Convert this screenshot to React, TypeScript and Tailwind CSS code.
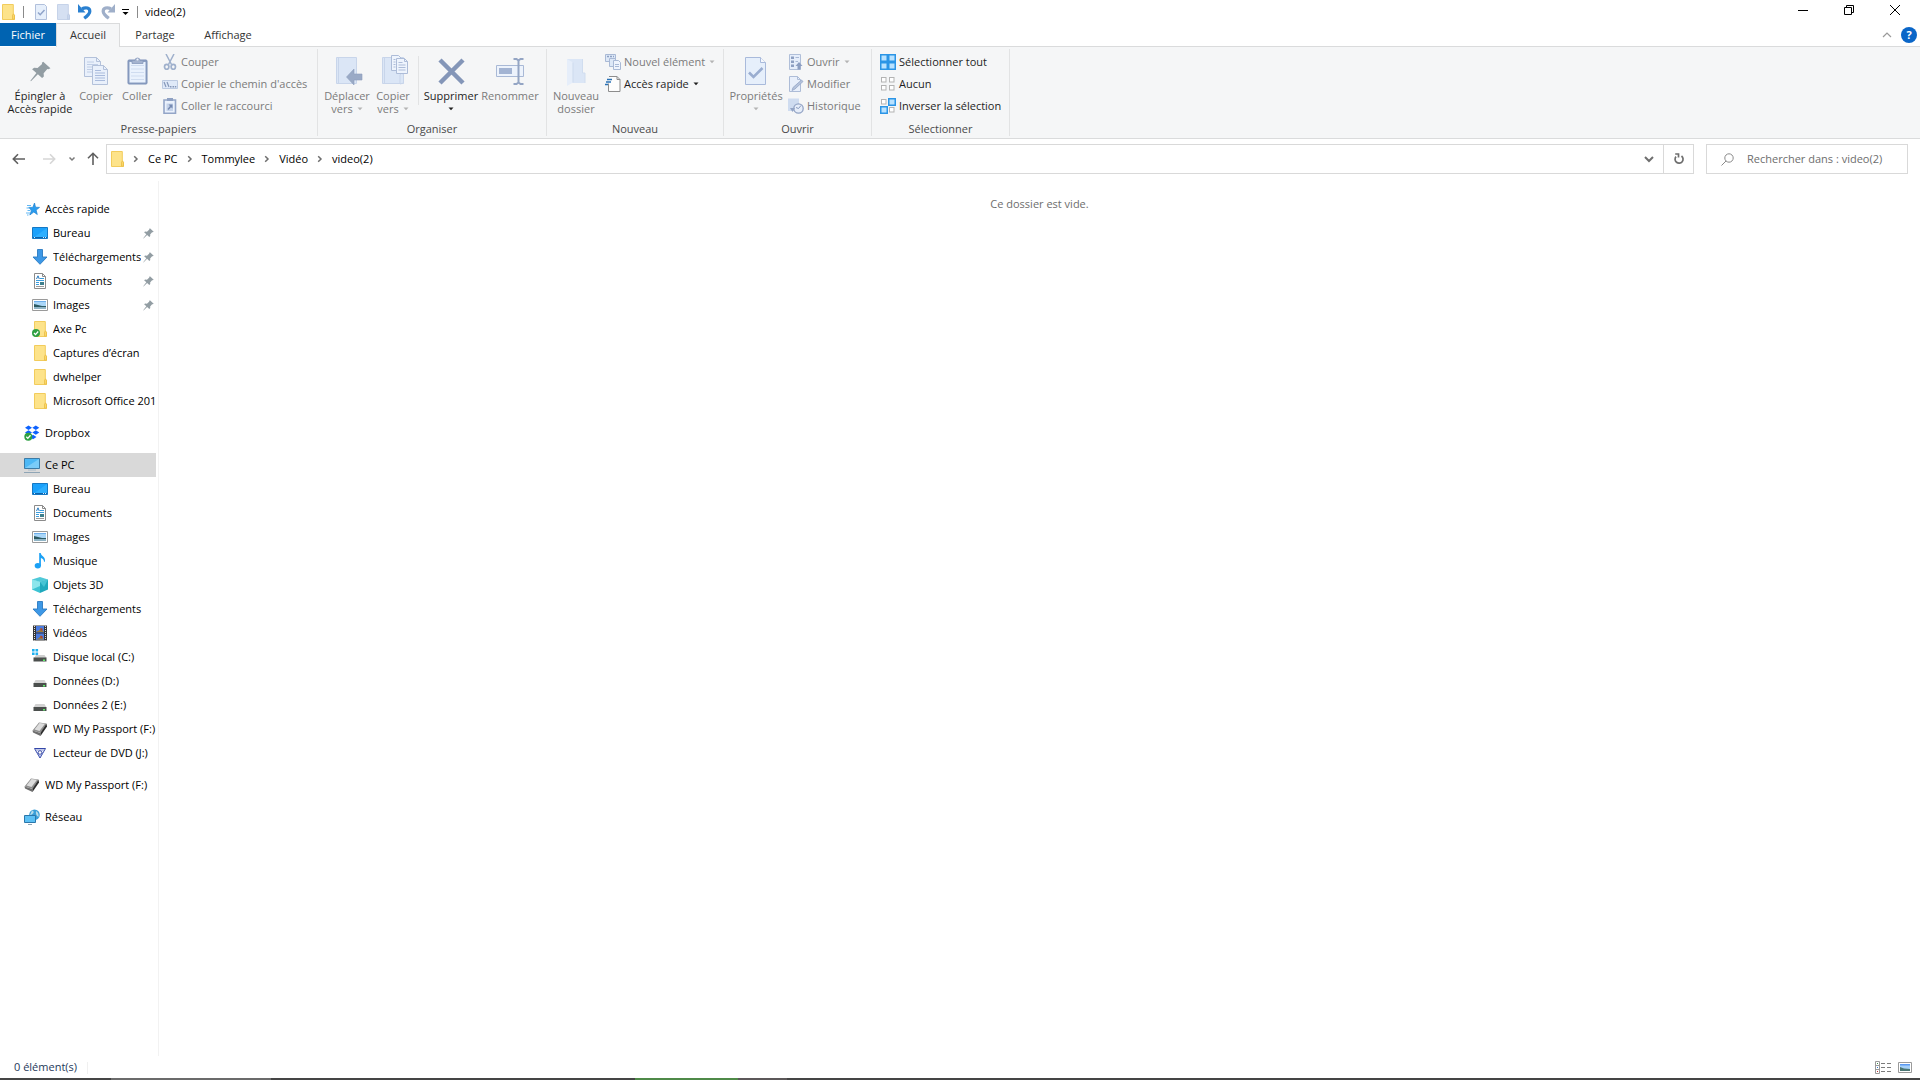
import type { ReactNode } from "react";
import { clsx } from "clsx";

/* ---------- shared glyphs ---------- */

function Caret({ className = "fill-[#b4b4b4]" }: { className?: string }) {
  return (
    <svg width="6" height="4" viewBox="0 0 6 4" className={clsx("shrink-0", className)}>
      <path d="M0.5 0.5h5L3 3.3z" />
    </svg>
  );
}

function Chevron() {
  return (
    <svg width="6" height="8" viewBox="0 0 6 8" fill="none" stroke="#6e6e6e" strokeWidth="1.500">
      <path d="M1.200 1.200L4 4 1.200 6.800" />
    </svg>
  );
}

function FolderIcon({ faded = false }: { faded?: boolean }) {
  return (
    <svg width="16" height="16" viewBox="0 0 16 16">
      <path
        d="M2.500.5h10.800v9.800l1.200 1.200v4h-12z"
        fill={faded ? "#d5e0f2" : "#fde38a"}
        stroke={faded ? "#c6d3e9" : "#f2cc5c"}
      />
      <path
        d="M12.500 15.200v-4l1-1.400 1 1.400v4z"
        fill={faded ? "#c9d6ec" : "#fbd768"}
        stroke={faded ? "#bccbe4" : "#e9bd45"}
        strokeWidth=".8"
      />
    </svg>
  );
}

function PinIcon({ size }: { size: number }) {
  return (
    <svg width={size} height={size} viewBox="0 0 20 20" fill="#929da3">
      <path d="M12.600 0.600l6.900 6.200-1.900 1.100-1.100-.3-3.500 4 .2 3.100-1.700 1.500-4-3.700L.9 19.300l-.5-.5 5.700-7.400L2 7.800l1.900-1.400 3.300.3 4.300-3.800-.2-1.200z" />
    </svg>
  );
}

/* ---------- ribbon icons, large ---------- */

function CopyLarge() {
  return (
    <svg width="32" height="32" viewBox="0 0 32 32" fill="#e9f0fb" stroke="#b3c1da">
      <path d="M4.500 2.500h12l4 4v15h-16z" />
      <path d="M16.500 2.500v4h4" fill="none" />
      <path d="M7 7h7M7 9.500h11M7 12h11M7 14.500h11M7 17h11" stroke="#c0cee6" />
      <path d="M12.500 10.500h11l4 4v15h-15z" />
      <path d="M23.500 10.500v4h4" fill="none" />
      <path d="M15 15.500h6M15 18h10M15 20.500h10M15 23h10M15 25.500h10" stroke="#a9bbdc" />
    </svg>
  );
}

function PasteLarge() {
  return (
    <svg width="32" height="32" viewBox="0 0 32 32">
      <rect x="7" y="5" width="19" height="24" rx="1" fill="#8c9fc2" stroke="#7d91b8" />
      <path d="M8.500 7h16v20.500h-16z" fill="#eaf2fd" />
      <path d="M10 10.500h13M10 14h13M10 17.500h13M10 21h13M10 24.500h13" stroke="#cfdcf0" />
      <path d="M11 8.500v-3h3a2.500 2.500 0 0 1 5 0h3v3z" fill="#a4b3cf" stroke="#8799bb" strokeWidth=".8" />
      <circle cx="16.500" cy="4.500" r="1" fill="#eef3fb" />
    </svg>
  );
}

function MoveLarge() {
  return (
    <svg width="32" height="32" viewBox="0 0 32 32">
      <path d="M5.500 2.500h20v26h-20z" fill="#dbe6f6" stroke="#c8d5ea" />
      <path d="M7.500 3v25" stroke="#c8d5ea" />
      <path d="M15.500 22l7.500-8v5h8v6h-8v5z" fill="#9aaac6" stroke="#8f9fbd" strokeWidth=".6" />
    </svg>
  );
}

function CopyToLarge() {
  return (
    <svg width="32" height="32" viewBox="0 0 32 32">
      <path d="M5.500 2.500h21v26h-21z" fill="#dbe6f6" stroke="#c8d5ea" />
      <path d="M7.500 3v25M23 29v-9l2-3 1.500 3v8z" stroke="#c8d5ea" fill="none" />
      <g fill="#eef4fd" stroke="#adbcd8">
        <path d="M14.500.500h7l3 3v12h-10z" />
        <path d="M16.500 4.500h2M16.500 7h2M16.500 9.500h2M16.500 12h2" />
        <path d="M19.500 3.500h8l3 3v12h-11z" />
        <path d="M27.500 3.500v3h3" fill="none" />
        <path d="M21.500 7.500h4M21.500 10h7M21.500 12.500h7M21.500 15h7" />
      </g>
    </svg>
  );
}

function DeleteLarge() {
  return (
    <svg width="32" height="32" viewBox="0 0 32 32">
      <path d="M5 5l23 23M28 5L5 28" stroke="#8496b8" strokeWidth="4.500" />
    </svg>
  );
}

function RenameLarge() {
  return (
    <svg width="32" height="32" viewBox="0 0 32 32">
      <path d="M2.500 10.500h27v11h-27z" fill="#edf3fc" stroke="#a9b9d6" />
      <path d="M5 13h13v6H5z" fill="#a3b4d3" />
      <path d="M19.500 4h3l2 1.500 2-1.500h3M24.500 5.500v22M19.500 29h3l2-1.500 2 1.500h3" fill="none" stroke="#94a5c4" strokeWidth="2" />
    </svg>
  );
}

function NewFolderLarge() {
  return (
    <svg width="32" height="32" viewBox="0 0 32 32">
      <path d="M7 4h15.500v14h2.500v10H7z" fill="#dbe6f6" />
      <path d="M7 4l6 3.500v20L7 31z" fill="#e6eefa" />
      <path d="M13 7.500v20" stroke="#cddaed" />
      <path d="M22.500 4v14h2.500v10" fill="none" stroke="#d0ddef" />
    </svg>
  );
}

function PropertiesLarge() {
  return (
    <svg width="32" height="32" viewBox="0 0 32 32">
      <path d="M5.500 2.500h15l5 5v22h-20z" fill="#e6effb" stroke="#a9badb" />
      <path d="M20.500 2.500v5h5" fill="#f5f8fd" stroke="#a9badb" />
      <path d="M9 17.500l4.500 4.500L22.500 13" fill="none" stroke="#9aadd0" strokeWidth="2.600" />
    </svg>
  );
}

/* ---------- ribbon icons, small ---------- */

function CutIcon() {
  return (
    <svg width="16" height="16" viewBox="0 0 16 16" fill="none" stroke="#9fb0cc">
      <path d="M4 0l5.500 10.500M12 0L6.500 10.500" strokeWidth="1.500" />
      <ellipse cx="4.700" cy="12.800" rx="2.200" ry="2.500" strokeWidth="1.700" />
      <ellipse cx="11.300" cy="12.800" rx="2.200" ry="2.500" strokeWidth="1.700" />
    </svg>
  );
}

function PathIcon() {
  return (
    <svg width="16" height="16" viewBox="0 0 16 16">
      <path d="M.5 4.500h15v8H.500z" fill="#dfe9f8" stroke="#bccae1" />
      <path d="M2 6l2 5M5 6l2 5" stroke="#8597b8" strokeWidth="1.200" />
      <path d="M8 10h1.500v1.500H8zM10.500 10H12v1.500h-1.500zM12.800 10h1.500v1.500h-1.500z" fill="#8597b8" />
    </svg>
  );
}

function ShortcutPasteIcon() {
  return (
    <svg width="16" height="16" viewBox="0 0 16 16">
      <path d="M2 2h11.500v13.200H2z" fill="#eaf1fc" stroke="#93a5c7" strokeWidth="1.600" />
      <path d="M5 0h6v3H5z" fill="#8fa1c3" />
      <path d="M4.500 5.500h6.500v7.500H4.500z" fill="#c5d3ea" />
      <path d="M6.500 6.500h4v4L9 9.200 6.500 12l-1-1L8 8z" fill="#7589b1" />
    </svg>
  );
}

function NewItemIcon() {
  return (
    <svg width="16" height="16" viewBox="0 0 16 16" fill="#dde8f7" stroke="#a9b9d5">
      <path d="M.5.5h10v7H.500z" />
      <path d="M2 2.500h2M5 2.500h2M8 2.500h1" stroke="#8ea1c3" strokeWidth="1.400" />
      <path d="M4.500 4.500h6v8h-6z" />
      <path d="M8.500 6.500h5l2 2v7h-7z" fill="#eff4fd" />
      <path d="M10 10.500h4M10 12.500h4" />
    </svg>
  );
}

function EasyAccessIcon() {
  return (
    <svg width="16" height="16" viewBox="0 0 16 16">
      <path d="M4 .5h8l3 3v12H3.500v-8" fill="#fdfdfd" stroke="#8d8d8d" />
      <path d="M12 .5v3h3" fill="none" stroke="#8d8d8d" />
      <path d="M2 3.500h5M1 6h5M0 8.500h3" stroke="#2a72b5" strokeWidth="1.300" />
    </svg>
  );
}

function OpenIcon() {
  return (
    <svg width="16" height="16" viewBox="0 0 16 16">
      <path d="M1.500.5h11v15h-11z" fill="#e6eefb" stroke="#b0bfd9" />
      <path d="M3 2.500h3v2.500H3zM3 6.500h3V9H3zM3 10.500h3V13H3z" fill="#8ea0c2" />
      <path d="M7.500 3.500H11M7.500 7.500H10" stroke="#a9b9d5" />
      <path d="M11 8l3.500 4h-2v3.500h-3V12h-2z" fill="#8c9ec1" />
    </svg>
  );
}

function EditIcon() {
  return (
    <svg width="16" height="16" viewBox="0 0 16 16">
      <path d="M1.500.5h8l3 3v12h-11z" fill="#e8effb" stroke="#adbcd7" />
      <path d="M9.500.5v3h3" fill="none" stroke="#adbcd7" />
      <path d="M4 14.500l1-3L13.500 4 15 5.500l-8 7.500z" fill="#b5c3dc" stroke="#93a5c7" strokeWidth=".8" />
    </svg>
  );
}

function HistoryIcon() {
  return (
    <svg width="16" height="16" viewBox="0 0 16 16">
      <path d="M0 .5h11v12.500H0z" fill="#cfdcf0" />
      <circle cx="10.500" cy="10.500" r="4.700" fill="#e6edf9" stroke="#93a4c5" strokeWidth="1.300" />
      <path d="M10.500 10.500l2.500-3M10.500 10.500l-2.500-1" stroke="#8799bd" />
      <path d="M2 10h5l-2.500 4z" fill="#93a4c5" />
    </svg>
  );
}

type Cell = [x: number, y: number, on: boolean];

function SelectCells({ cells }: { cells: Cell[] }) {
  return (
    <svg width="16" height="16" viewBox="0 0 16 16">
      {cells.map(([x, y, on]) => (
        <rect
          key={`${x}-${y}`}
          x={x + (on ? 0.75 : 1.5)}
          y={y + (on ? 0.75 : 1.5)}
          width={on ? 6.5 : 4.5}
          height={on ? 6.5 : 4.5}
          fill={on ? "#b9e2ff" : "#fff"}
          stroke={on ? "#2b95e6" : "#b3b3b3"}
          strokeWidth={on ? 1.5 : 1}
        />
      ))}
    </svg>
  );
}

/* ---------- navigation pane icons ---------- */

const navIcons = {
  star: (
    <svg width="16" height="16" viewBox="0 0 16 16">
      <path d="M10.500 2l1 4.200 4 .2-3.400 2.700 1.200 4.400L9.800 11l-4 3 1.700-4.600L4.800 6.400h4z" fill="#2a9df0" stroke="#1c7fce" strokeWidth=".7" />
      <path d="M3 4.500h4M2.500 7h3M3.500 9.500h3M2 12h4M3 14h1.500" stroke="#63b8f4" />
    </svg>
  ),
  desktop: (
    <svg width="16" height="16" viewBox="0 0 16 16">
      <path d="M.5 2.500h15v11H.500z" fill="#1ba1fb" stroke="#1578c4" />
      <path d="M1 13L15 3v10z" fill="#2dafff" />
      <path d="M1 12.500h14" stroke="#0c62ab" />
      <path d="M2 12.500h1M11 12.500h1M13 12.500h1" stroke="#d5efff" />
    </svg>
  ),
  download: (
    <svg width="16" height="16" viewBox="0 0 16 16">
      <path d="M5.500.5h5v7.500h4.500L8 15.300 1 8h4.500z" fill="#3d98e6" stroke="#2a7ac2" strokeWidth=".9" />
    </svg>
  ),
  document: (
    <svg width="16" height="16" viewBox="0 0 16 16">
      <path d="M2.500.5h8l3 3v12h-11z" fill="#fff" stroke="#8b8b8b" />
      <path d="M10.500.5v3h3" fill="none" stroke="#8b8b8b" />
      <path d="M8 5.500h4M4 7.500h8M4 9.500h3M4 11.500h3" stroke="#3c9ddc" />
      <path d="M4.500 6L6 2.800 7.300 6" fill="none" stroke="#2779bd" />
      <path d="M8 9h4v3H8z" fill="#3f7f8c" />
      <path d="M4 13.500h8" stroke="#9a9a9a" />
    </svg>
  ),
  image: (
    <svg width="16" height="16" viewBox="0 0 16 16">
      <path d="M.5 2.500h15v11H.500z" fill="#fff" stroke="#9a9a9a" />
      <path d="M2 4h12v8H2z" fill="#a9d6f8" />
      <path d="M2 4h12v1H2z" fill="#6eaeeb" />
      <path d="M2 7l4 1 4 1h4v1H2z" fill="#2c5a63" />
      <path d="M2 10h12v2H2z" fill="#8fb4c6" />
    </svg>
  ),
  folder: <FolderIcon />,
  syncedFolder: (
    <svg width="16" height="16" viewBox="0 0 16 16">
      <path d="M2.500.5h10.800v9.800l1.200 1.200v4h-12z" fill="#fde38a" stroke="#f2cc5c" />
      <path d="M12.500 15.200v-4l1-1.400 1 1.400v4z" fill="#fbd768" stroke="#e9bd45" strokeWidth=".8" />
      <circle cx="4" cy="12" r="4" fill="#2fa043" />
      <path d="M2 12l1.500 1.600L6.200 10.500" fill="none" stroke="#fff" strokeWidth="1.300" />
    </svg>
  ),
  dropbox: (
    <svg width="16" height="16" viewBox="0 0 16 16">
      <path
        d="M4.500.5L8 2.700 4.500 4.900 1 2.700zM11.800.5l3.500 2.200-3.500 2.200-3.500-2.200zM4.500 5.300L8 7.500 4.500 9.700 1 7.500zM11.800 5.300l3.500 2.200-3.500 2.200-3.500-2.200zM9 9.800l3.500 2.200L9 14.200 6 12z"
        fill="#0d62fe"
      />
      <circle cx="4.300" cy="11.800" r="4" fill="#2fa043" />
      <path d="M2.300 11.800l1.500 1.600 2.700-3.100" fill="none" stroke="#fff" strokeWidth="1.300" />
    </svg>
  ),
  pc: (
    <svg width="16" height="16" viewBox="0 0 16 16">
      <path d="M.5 1.500h15v10H.500z" fill="#4db8f5" stroke="#3c7ba6" />
      <path d="M1 11L15 2v9z" fill="#7accf9" />
      <path d="M4 13h8" stroke="#a8bccb" />
      <path d="M0 15.500h16" stroke="#8fa5b5" />
    </svg>
  ),
  music: (
    <svg width="16" height="16" viewBox="0 0 16 16" fill="#1ba1f5">
      <path d="M7.200 0h1.500c.3 3 4.800 3.500 4.300 8-.3 1-.9 1.300-1 .8C12 6.500 10.500 5.500 8.900 5v8h-1.700z" />
      <ellipse cx="5.800" cy="12.800" rx="3.100" ry="2.700" />
    </svg>
  ),
  cube: (
    <svg width="16" height="16" viewBox="0 0 16 16">
      <path d="M0 2.500L8 0l8 2.500L8 5z" fill="#4fc9d8" />
      <path d="M0 2.500L8 5v11l-8-3.500z" fill="#3cc3d3" />
      <path d="M16 2.500L8 5v11l8-3.500z" fill="#1fa9bd" />
      <path d="M0 2.500L8 5v4L0 12.500z" fill="#8ce6ec" />
      <path d="M8 5l8-2.500-4 7.500z" fill="#45c4d4" />
    </svg>
  ),
  video: (
    <svg width="16" height="16" viewBox="0 0 16 16">
      <path d="M1 .500h14v15H1z" fill="#353535" />
      <path d="M2.500 1v14.500M13.500 1v14.500" stroke="#dedede" strokeDasharray="1 1" />
      <path d="M4 1h8v6.500H4zM4 8.500h8V15H4z" fill="#4a7be0" />
      <path d="M4 7l3-1.500 2-3 1.500 3L12 7zM4 14.500l3-1.500 2-3 1.500 3 1.500 1.500z" fill="#9a7a3c" />
      <path d="M8.500 3.500h2v2h-2zM8.500 11h2v2h-2z" fill="#b0402e" />
    </svg>
  ),
  systemDrive: (
    <svg width="16" height="16" viewBox="0 0 16 16">
      <path d="M0 0h2.600v2.600H0zM3.500 0h2.600v2.600H3.500zM0 3.500h2.600v2.600H0zM3.500 3.500h2.600v2.600H3.500z" fill="#1fb0ef" />
      <path d="M4 6h8.500L14.500 9H2z" fill="#cfcfcf" />
      <path d="M1.500 8.500h13v4h-13z" fill="#4b4f4d" />
      <path d="M11 10.500h2V12h-2z" fill="#5ff06a" />
    </svg>
  ),
  drive: (
    <svg width="16" height="16" viewBox="0 0 16 16">
      <path d="M3.500 7h9l2 3.500h-13z" fill="#d2d2d2" />
      <path d="M1.500 10h13v4h-13z" fill="#4b4f4d" />
      <path d="M11 12h2v1.500h-2z" fill="#5ff06a" />
    </svg>
  ),
  passport: (
    <svg width="16" height="16" viewBox="0 0 16 16">
      <path d="M7 1.500l7.500 1L9 12 .5 9.500z" fill="#8d8d8d" />
      <path d="M7.500 2l5.500.8L7.500 10l-5-1.500z" fill="#dcdcdc" />
      <path d="M.5 9.500L8.500 12v3L1 11.500z" fill="#6e6e6e" />
      <path d="M14.500 2.500l.5 3L8.500 15v-3z" fill="#2b2b2b" />
    </svg>
  ),
  dvd: (
    <svg width="16" height="16" viewBox="0 0 16 16">
      <path d="M2.500 3.500h11L8 13z" fill="#f4f6fd" stroke="#3347a8" />
      <path d="M4 5h8M4.500 6.500L8 12M11.500 6.500L8 12" stroke="#7483cc" strokeWidth=".8" />
      <circle cx="8" cy="7.500" r="1.800" fill="#fff" stroke="#33459f" strokeWidth=".9" />
    </svg>
  ),
  network: (
    <svg width="16" height="16" viewBox="0 0 16 16">
      <circle cx="10.500" cy="5.800" r="5.300" fill="#3a9fd8" />
      <path d="M8 1.500c2 .5 2 2 1 3s-2 1.500-3 1.500M12 2c2 1 3 3 2.500 6-2-1-3-3-2.500-6z" fill="#b7dbe9" />
      <path d="M.5 6.500h11v7H.500z" fill="#5cc0f4" stroke="#2b77ab" />
      <path d="M4 15.500h4" stroke="#8fa5b5" />
    </svg>
  ),
};

type NavIcon = keyof typeof navIcons;

interface NavEntry {
  label: string;
  icon: NavIcon;
  pinned?: boolean;
}

interface NavSection extends NavEntry {
  selected?: boolean;
  children?: NavEntry[];
}

const navSections: NavSection[] = [
  {
    label: "Accès rapide",
    icon: "star",
    children: [
      { label: "Bureau", icon: "desktop", pinned: true },
      { label: "Téléchargements", icon: "download", pinned: true },
      { label: "Documents", icon: "document", pinned: true },
      { label: "Images", icon: "image", pinned: true },
      { label: "Axe Pc", icon: "syncedFolder" },
      { label: "Captures d’écran", icon: "folder" },
      { label: "dwhelper", icon: "folder" },
      { label: "Microsoft Office 201", icon: "folder" },
    ],
  },
  { label: "Dropbox", icon: "dropbox" },
  {
    label: "Ce PC",
    icon: "pc",
    selected: true,
    children: [
      { label: "Bureau", icon: "desktop" },
      { label: "Documents", icon: "document" },
      { label: "Images", icon: "image" },
      { label: "Musique", icon: "music" },
      { label: "Objets 3D", icon: "cube" },
      { label: "Téléchargements", icon: "download" },
      { label: "Vidéos", icon: "video" },
      { label: "Disque local (C:)", icon: "systemDrive" },
      { label: "Données (D:)", icon: "drive" },
      { label: "Données 2 (E:)", icon: "drive" },
      { label: "WD My Passport (F:)", icon: "passport" },
      { label: "Lecteur de DVD (J:)", icon: "dvd" },
    ],
  },
  { label: "WD My Passport (F:)", icon: "passport" },
  { label: "Réseau", icon: "network" },
];

/* ---------- title bar ---------- */

function TitleBar() {
  return (
    <header className="flex h-[23px] items-center">
      <FolderIcon />
      <span className="ml-[7px] h-3 w-px bg-[#8a8a8a]" />
      <div className="ml-[9px] flex items-center gap-[6px]">
        <button aria-label="Propriétés" className="h-4 w-4">
          <svg width="16" height="16" viewBox="0 0 16 16">
            <path d="M2.500.5h9l2 2v13h-11z" fill="#e6effb" stroke="#b1c0dc" />
            <path d="M5 8.500l2.200 2.200L11.500 6" fill="none" stroke="#8fa3c9" strokeWidth="1.500" />
          </svg>
        </button>
        <button aria-label="Nouveau dossier" className="h-4 w-4">
          <FolderIcon faded />
        </button>
        <button aria-label="Annuler" className="h-4 w-4">
          <svg width="16" height="16" viewBox="0 0 16 16" fill="none" stroke="#2a80d0">
            <path d="M5 4.800c4-2 8-.8 7.800 2.700-.2 2.500-2.500 4.500-5.600 6.800" strokeWidth="3.200" />
            <path d="M1 0v8.500h7.500z" fill="#2a80d0" stroke="none" />
          </svg>
        </button>
        <button aria-label="Rétablir" className="ml-px h-4 w-4">
          <svg width="16" height="16" viewBox="0 0 16 16" fill="none" stroke="#9fafc9">
            <path d="M11 4.800c-4-2-8-.8-7.800 2.700.2 2.500 2.500 4.500 5.600 6.800" strokeWidth="3.200" />
            <path d="M15 0v8.500H7.500z" fill="#9fafc9" stroke="none" />
          </svg>
        </button>
        <button aria-label="Personnaliser la barre d’outils" className="flex h-4 w-3 items-center">
          <svg width="7" height="7" viewBox="0 0 7 7">
            <path d="M0 1.500h7" stroke="#000" />
            <path d="M.5 4h6l-3 3z" />
          </svg>
        </button>
      </div>
      <span className="ml-[3px] h-3 w-px bg-[#8a8a8a]" />
      <h1 className="ml-[7px] pt-px text-[11px]">video(2)</h1>
      <div className="ml-auto flex h-full pr-[2px]">
        <button aria-label="Réduire" className="flex w-[46px] items-center justify-center pb-[3px]">
          <svg width="10" height="10" viewBox="0 0 10 10">
            <path d="M0 5.500h10" stroke="#000" />
          </svg>
        </button>
        <button aria-label="Restaurer" className="flex w-[46px] items-center justify-center pb-[3px]">
          <svg width="10" height="10" viewBox="0 0 10 10" fill="none" stroke="#000">
            <path d="M.5 2.500h7v7h-7zM2.500 2V.5h7v7H8" />
          </svg>
        </button>
        <button aria-label="Fermer" className="flex w-[46px] items-center justify-center pb-[3px]">
          <svg width="10" height="10" viewBox="0 0 10 10" stroke="#000">
            <path d="M0 0l10 10M10 0L0 10" />
          </svg>
        </button>
      </div>
    </header>
  );
}

/* ---------- ribbon ---------- */

function RibbonTabs() {
  return (
    <div role="tablist" className="flex h-6 items-stretch text-[11px] text-[#333]">
      <button role="tab" className="mb-px w-14 bg-[#0063b1] pt-px text-white">
        Fichier
      </button>
      <button
        role="tab"
        aria-selected="true"
        className="w-16 border border-b-0 border-[#dadbdc] bg-[#f5f6f7]"
      >
        Accueil
      </button>
      <div className="flex flex-1 items-center border-b border-[#dadbdc]">
        <button role="tab" className="w-[70px] pt-px">
          Partage
        </button>
        <button role="tab" className="w-[76px] pt-px">
          Affichage
        </button>
        <div className="ml-auto flex items-center gap-[9px] pr-[3px]">
          <button aria-label="Réduire le ruban">
            <svg width="10" height="6" viewBox="0 0 10 6" fill="none" stroke="#9a9a9a" strokeWidth="1.200">
              <path d="M1 5l4-4 4 4" />
            </svg>
          </button>
          <button
            aria-label="Aide"
            className="h-4 w-4 rounded-full bg-[#0a66c8] text-[11px] leading-4 font-bold text-white"
          >
            ?
          </button>
        </div>
      </div>
    </div>
  );
}

interface RibbonButtonProps {
  icon: ReactNode;
  children: ReactNode;
  className?: string;
  enabled?: boolean;
}

function LargeButton({ icon, children, className, enabled }: RibbonButtonProps) {
  return (
    <button
      disabled={!enabled}
      className={clsx(
        "flex shrink-0 flex-col items-center gap-[2px] pt-[6px] leading-[13px] whitespace-nowrap",
        enabled ? "text-[#1e1e1e]" : "text-[#7b7b7b]",
        className,
      )}
    >
      <span className="flex h-8 w-8 items-center justify-center">{icon}</span>
      <span className="flex flex-col items-center">{children}</span>
    </button>
  );
}

function SmallButton({ icon, children, enabled }: RibbonButtonProps) {
  return (
    <button
      disabled={!enabled}
      className={clsx(
        "flex h-[22px] items-center gap-[3px] px-1 whitespace-nowrap",
        enabled ? "text-[#1e1e1e]" : "text-[#7b7b7b]",
      )}
    >
      {icon}
      <span className="flex items-center gap-1">{children}</span>
    </button>
  );
}

function RibbonGroup({
  title,
  className,
  children,
}: {
  title: string;
  className: string;
  children: ReactNode;
}) {
  return (
    <section
      aria-label={title}
      className={clsx("my-[2px] flex shrink-0 flex-col border-r border-[#e2e3e4]", className)}
    >
      <div className="flex flex-1 pl-1">{children}</div>
      <div className="h-[15px] text-center leading-[15px] text-[#4a4a4a]">{title}</div>
    </section>
  );
}

function Ribbon() {
  return (
    <div className="flex h-[92px] border-b border-[#dadbdc] bg-[#f5f6f7] text-[11px]">
      <RibbonGroup title="Presse-papiers" className="w-[318px]">
        <LargeButton icon={<PinIcon size={21} />} className="w-[72px]" enabled>
          <span>Épingler à</span>
          <span>Accès rapide</span>
        </LargeButton>
        <LargeButton icon={<CopyLarge />} className="w-[40px]">
          Copier
        </LargeButton>
        <LargeButton icon={<PasteLarge />} className="w-[42px]">
          Coller
        </LargeButton>
        <div className="flex flex-col pt-[2px]">
          <SmallButton icon={<CutIcon />}>Couper</SmallButton>
          <SmallButton icon={<PathIcon />}>Copier le chemin d'accès</SmallButton>
          <SmallButton icon={<ShortcutPasteIcon />}>Coller le raccourci</SmallButton>
        </div>
      </RibbonGroup>

      <RibbonGroup title="Organiser" className="w-[229px]">
        <LargeButton icon={<MoveLarge />} className="w-[50px]">
          <span>Déplacer</span>
          <span className="flex items-center gap-1">
            vers <Caret />
          </span>
        </LargeButton>
        <LargeButton icon={<CopyToLarge />} className="w-[42px]">
          <span>Copier</span>
          <span className="flex items-center gap-1">
            vers <Caret />
          </span>
        </LargeButton>
        <span className="mt-[7px] mr-[2px] mb-4 ml-1 w-px bg-[#e2e3e4]" />
        <LargeButton icon={<DeleteLarge />} className="w-[60px]" enabled>
          <span>Supprimer</span>
          <span className="flex h-[13px] items-center">
            <Caret className="fill-[#1e1e1e]" />
          </span>
        </LargeButton>
        <LargeButton icon={<RenameLarge />} className="w-[58px]">
          Renommer
        </LargeButton>
      </RibbonGroup>

      <RibbonGroup title="Nouveau" className="w-[177px]">
        <LargeButton icon={<NewFolderLarge />} className="w-[50px]">
          <span>Nouveau</span>
          <span>dossier</span>
        </LargeButton>
        <div className="flex flex-col pt-[2px]">
          <SmallButton icon={<NewItemIcon />}>
            Nouvel élément <Caret />
          </SmallButton>
          <SmallButton icon={<EasyAccessIcon />} enabled>
            Accès rapide <Caret className="fill-[#1e1e1e]" />
          </SmallButton>
        </div>
      </RibbonGroup>

      <RibbonGroup title="Ouvrir" className="w-[148px]">
        <LargeButton icon={<PropertiesLarge />} className="w-[56px]">
          <span>Propriétés</span>
          <span className="flex h-[13px] items-center">
            <Caret />
          </span>
        </LargeButton>
        <div className="flex flex-col pt-[2px]">
          <SmallButton icon={<OpenIcon />}>
            Ouvrir <Caret />
          </SmallButton>
          <SmallButton icon={<EditIcon />}>Modifier</SmallButton>
          <SmallButton icon={<HistoryIcon />}>Historique</SmallButton>
        </div>
      </RibbonGroup>

      <RibbonGroup title="Sélectionner" className="w-[138px]">
        <div className="flex flex-col pt-[2px]">
          <SmallButton
            icon={<SelectCells cells={[[0, 0, true], [8, 0, true], [0, 8, true], [8, 8, true]]} />}
            enabled
          >
            Sélectionner tout
          </SmallButton>
          <SmallButton
            icon={<SelectCells cells={[[0, 0, false], [8, 0, false], [0, 8, false], [8, 8, false]]} />}
            enabled
          >
            Aucun
          </SmallButton>
          <SmallButton
            icon={<SelectCells cells={[[0, 0, false], [8, 0, true], [0, 8, true], [8, 8, false]]} />}
            enabled
          >
            Inverser la sélection
          </SmallButton>
        </div>
      </RibbonGroup>
    </div>
  );
}

/* ---------- address bar ---------- */

const crumbs = ["Ce PC", "Tommylee", "Vidéo", "video(2)"];

function AddressBar() {
  return (
    <div className="mb-[2px] flex h-10 items-center px-3 text-[11px]">
      <div className="flex w-[94px] shrink-0 items-center">
        <button aria-label="Précédent">
          <svg width="14" height="12" viewBox="0 0 14 12" fill="none" stroke="#5f5f5f" strokeWidth="1.600">
            <path d="M13 6H1.500M6 1.200L1.300 6 6 10.800" />
          </svg>
        </button>
        <button aria-label="Suivant" className="ml-4">
          <svg width="14" height="12" viewBox="0 0 14 12" fill="none" stroke="#d6d6d6" strokeWidth="1.600">
            <path d="M1 6h11.500M8 1.200L12.700 6 8 10.800" />
          </svg>
        </button>
        <button aria-label="Emplacements récents" className="ml-3">
          <svg width="8" height="6" viewBox="0 0 8 6" fill="none" stroke="#7a7a7a" strokeWidth="1.500">
            <path d="M1.500 1.500L4 4l2.500-2.500" />
          </svg>
        </button>
        <button aria-label="Dossier parent" className="ml-[11px]">
          <svg width="12" height="14" viewBox="0 0 12 14" fill="none" stroke="#5f5f5f" strokeWidth="1.600">
            <path d="M6 13V1.500M1 6.300L6 1.300l5 5" />
          </svg>
        </button>
      </div>

      <nav aria-label="Adresse" className="flex h-[30px] flex-1 items-center border border-[#d9d9d9] pl-[2px]">
        <FolderIcon />
        <ol className="-ml-px flex items-center">
          {crumbs.map((crumb) => (
            <li key={crumb} className="flex items-center">
              <span className="flex w-6 justify-center">
                <Chevron />
              </span>
              <button className="text-black">{crumb}</button>
            </li>
          ))}
        </ol>
        <button aria-label="Afficher les emplacements" className="ml-auto flex w-7 justify-center">
          <svg width="10" height="7" viewBox="0 0 10 7" fill="none" stroke="#6f6f6f" strokeWidth="2">
            <path d="M1 1l4 4 4-4" />
          </svg>
        </button>
        <button
          aria-label="Actualiser"
          className="flex h-full w-[30px] items-center justify-center border-l border-[#d9d9d9]"
        >
          <svg width="12" height="12" viewBox="0 0 12 12" fill="none" stroke="#6f6f6f" strokeWidth="1.700">
            <path d="M8.500 3A4 4 0 1 1 3 3.600M2.200 1h3.300v3.500" />
          </svg>
        </button>
      </nav>

      <label className="ml-3 flex h-[30px] w-[202px] items-center border border-[#d9d9d9] pl-[14px]">
        <svg width="13" height="13" viewBox="0 0 13 13" fill="none" stroke="#8a8a8a" className="shrink-0">
          <circle cx="8" cy="5" r="4.200" />
          <path d="M5 8L.5 12.500" />
        </svg>
        <input
          type="search"
          aria-label="Rechercher"
          placeholder="Rechercher dans : video(2)"
          className="ml-[13px] min-w-0 flex-1 outline-none placeholder:text-[#6d6d6d]"
        />
      </label>
    </div>
  );
}

/* ---------- navigation pane ---------- */

function NavRow({ entry, nested, selected }: { entry: NavEntry; nested?: boolean; selected?: boolean }) {
  return (
    <a
      href="#"
      className={clsx(
        "mr-[2px] flex h-6 items-center gap-[5px]",
        nested ? "pl-8" : "pl-6",
        selected && "bg-[#d9d9d9]",
      )}
    >
      <span className="shrink-0">{navIcons[entry.icon]}</span>
      <span className="min-w-0 flex-1 overflow-hidden whitespace-nowrap">{entry.label}</span>
      {entry.pinned && (
        <span className="-ml-[3px] shrink-0 pr-[2px]">
          <PinIcon size={11} />
        </span>
      )}
    </a>
  );
}

function NavigationPane() {
  return (
    <nav
      aria-label="Volet de navigation"
      className="flex w-[159px] shrink-0 flex-col gap-2 border-r border-[#f2f2f2] pt-4 text-[11px] text-black"
    >
      {navSections.map((section) => (
        <div key={section.label}>
          <NavRow entry={section} selected={section.selected} />
          {section.children?.map((child) => (
            <NavRow key={child.label} entry={child} nested />
          ))}
        </div>
      ))}
    </nav>
  );
}

/* ---------- status bar ---------- */

function StatusBar() {
  return (
    <footer className="flex h-[22px] items-center pt-px pr-2 pl-[14px] text-[11px] text-[#1e395b]">
      <span>0 élément(s)</span>
      <span className="ml-[10px] h-3 w-px bg-[#f0f0f0]" />
      <div className="ml-auto flex items-center gap-[7px]">
        <button aria-label="Détails">
          <svg width="16" height="13" viewBox="0 0 16 13" fill="none" stroke="#9a9a9a">
            <path d="M.5.5h4v12h-4zM.5 4.500h4M.5 8.500h4" />
            <path d="M6 2.500h4M12 2.500h4M6 6.500h4M12 6.500h4M6 10.500h4M12 10.500h4" stroke="#7c7c7c" />
            <path d="M2 2.500h1" stroke="#3c8a4a" />
            <path d="M2 6.500h1" stroke="#3478d0" />
            <path d="M2 10.500h1" stroke="#c03030" />
          </svg>
        </button>
        <button aria-label="Grandes icônes">
          <svg width="14" height="11" viewBox="0 0 14 11">
            <path d="M.5.5h13v10H.500z" fill="#fff" stroke="#9a9a9a" />
            <path d="M2 2h10v7H2z" fill="#a5d0f8" />
            <path d="M2 2h10v1.500H2z" fill="#5c9af2" />
            <path d="M2 5l4 1.500 6 .5v2H2z" fill="#4c7774" />
          </svg>
        </button>
      </div>
    </footer>
  );
}

export default function App() {
  return (
    <div className="flex h-screen flex-col overflow-hidden bg-white font-['Open_Sans',sans-serif] text-black">
      <TitleBar />
      <RibbonTabs />
      <Ribbon />
      <div className="flex min-h-0 flex-1 flex-col">
        <AddressBar />
        <div className="flex min-h-0 flex-1">
          <NavigationPane />
          <main className="flex-1 pt-[15px] text-center text-[11px] text-[#6d6d6d]">
            Ce dossier est vide.
          </main>
        </div>
      </div>
      <StatusBar />
      {/* top edge of the taskbar */}
      <div className="flex h-[2px] bg-[#454545]">
        <span className="ml-[111px] w-40 bg-[#6b6b6b]" />
        <span className="ml-[364px] w-[103px] bg-[#4f8a48]" />
        <span className="w-[49px] bg-[#5c5859]" />
      </div>
    </div>
  );
}
